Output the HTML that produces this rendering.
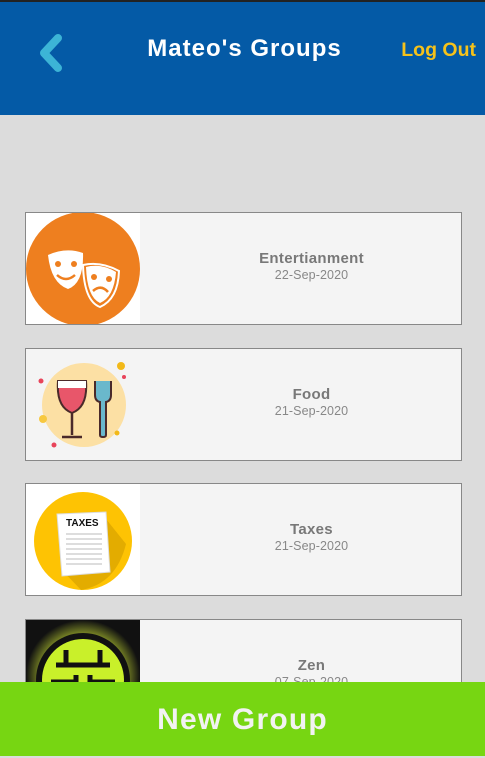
<!DOCTYPE html>
<html><head><meta charset="utf-8"><style>
*{margin:0;padding:0;box-sizing:border-box}
body{width:485px;height:756px;overflow:hidden;background:#dcdcdc;font-family:"Liberation Sans",sans-serif;position:relative}
.hdr{position:absolute;left:0;top:0;width:485px;height:115px;background:#045aa6;border-top:2px solid #222}
.title{position:absolute;left:0;right:0;top:33px;text-align:center;color:#fff;font-weight:bold;font-size:24px;letter-spacing:1px}
.title span{position:relative;left:2px}
.lo{position:absolute;right:9px;top:37px;color:#f5c21b;font-weight:bold;font-size:19.5px}
.back{position:absolute;left:36px;top:31px}
.card{position:absolute;left:25px;width:437px;height:113px;background:#f4f4f4;border:1px solid #888}
.img{position:absolute;left:0;top:0;width:114px;height:111px;overflow:hidden;background:#fff}
.txt{position:absolute;left:136px;right:0;top:37px;text-align:center;color:#777}
.txt b{display:block;font-size:15px;color:#787878;letter-spacing:0.3px}
.txt i{display:block;font-style:normal;font-size:12.5px;color:#888;margin-top:1px;letter-spacing:0.1px}
.foot{position:absolute;left:0;top:682px;width:485px;height:74px;background:#77d612;color:#f2f2f2;font-weight:bold;font-size:30px;letter-spacing:1.2px;text-align:center;line-height:76px}
</style></head><body>
<div class="hdr">
<svg class="back" width="30" height="40" viewBox="0 0 30 40"><path d="M22 5 L8 20 L22 35" fill="none" stroke="#3cb4d6" stroke-width="8" stroke-linecap="round" stroke-linejoin="round"/></svg>
<div class="title"><span>Mateo's Groups</span></div>
<div class="lo">Log Out</div>
</div>

<div class="card" style="top:212px"><div class="img">
<svg width="114" height="111"><circle cx="57" cy="56" r="57" fill="#ee7f1f"/>
<path d="M22 42 Q40 34 57 40 Q58 70 42 76 Q25 70 22 42Z" fill="#fff"/>
<circle cx="32" cy="51" r="3" fill="#ee7f1f"/><circle cx="48" cy="51" r="3" fill="#ee7f1f"/>
<path d="M31 62 Q40 70 49 62" stroke="#ee7f1f" stroke-width="2.5" fill="none"/>
<path d="M57 52 Q75 48 93 58 Q92 86 74 94 Q58 88 57 52Z" fill="#ee7f1f" stroke="#fff" stroke-width="2"/>
<path d="M60 54 Q75 50 90 59 Q88 84 74 90 Q61 84 60 54Z" fill="#fff"/>
<circle cx="68" cy="64" r="3" fill="#ee7f1f"/><circle cx="83" cy="66" r="3" fill="#ee7f1f"/>
<path d="M67 78 Q75 71 82 79" stroke="#ee7f1f" stroke-width="2.5" fill="none"/></svg>
</div><div class="txt"><b>Entertianment</b><i>22-Sep-2020</i></div></div>

<div class="card" style="top:348px"><div class="img" style="background:#f4f4f4">
<svg width="114" height="111"><circle cx="58" cy="56" r="42" fill="#fce0a4"/>
<circle cx="95" cy="17" r="4" fill="#f2b919"/><circle cx="15" cy="32" r="2.5" fill="#e8445a"/><circle cx="98" cy="28" r="2" fill="#e8445a"/><circle cx="17" cy="70" r="4" fill="#f7c840"/><circle cx="28" cy="96" r="2.5" fill="#e8445a"/><circle cx="91" cy="84" r="2.5" fill="#f2b919"/>
<path d="M32 32 H60 Q62 58 46 64 Q30 58 32 32Z" fill="#e8566a" stroke="#4a2a2a" stroke-width="2"/>
<rect x="32" y="32" width="28" height="7" fill="#fff"/>
<path d="M46 64 V86 M36 88 H56" stroke="#4a2a2a" stroke-width="2.5"/>
<path d="M69 32 V46 Q69 52 74 53 V86 Q74 88 77 88 Q80 88 80 86 V53 Q85 52 85 46 V32" fill="#6ab8cc" stroke="#4a2a2a" stroke-width="2"/></svg>
</div><div class="txt"><b>Food</b><i>21-Sep-2020</i></div></div>

<div class="card" style="top:483px"><div class="img">
<svg width="114" height="111"><circle cx="57" cy="57" r="49" fill="#fec303"/>
<path d="M80 35 L100 60 Q90 100 55 106 L35 85Z" fill="#e3ac00"/>
<path d="M31 30 L80 28 L84 88 L36 92Z" fill="#fff" stroke="#ddd"/>
<text x="40" y="42" font-family="Liberation Sans" font-weight="bold" font-size="10" fill="#111">TAXES</text>
<g stroke="#bbb" stroke-width="1"><path d="M40 50H76M40 55H76M40 60H76M40 65H76M40 70H76M40 75H76M40 80H76"/></g></svg>
</div><div class="txt"><b>Taxes</b><i>21-Sep-2020</i></div></div>

<div class="card" style="top:619px"><div class="img" style="background:#111">
<svg width="114" height="111"><defs><radialGradient id="g"><stop offset="0.5" stop-color="#e6ff3a"/><stop offset="1" stop-color="#111"/></radialGradient></defs>
<rect width="114" height="111" fill="url(#g)"/><circle cx="57" cy="60" r="47" fill="#111"/><circle cx="57" cy="60" r="41" fill="#c9f02a"/>
<path d="M30 45 H84 M40 30 V45 M74 30 V45 M25 62 H50 V55 M64 55 V62 H89" stroke="#111" stroke-width="5" fill="none"/></svg>
</div><div class="txt"><b>Zen</b><i>07-Sep-2020</i></div></div>

<div class="foot">New Group</div>
</body></html>
